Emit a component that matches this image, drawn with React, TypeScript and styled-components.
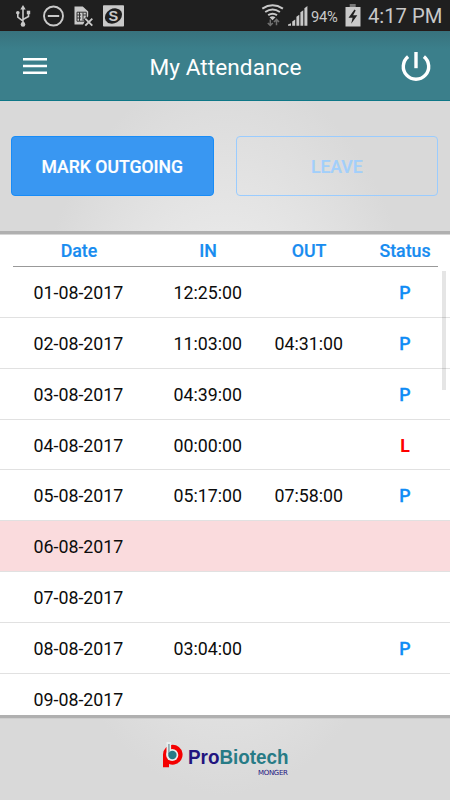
import React from 'react';
import styled, { createGlobalStyle } from 'styled-components';

const Global = createGlobalStyle`
  * { box-sizing: border-box; }
  body { margin: 0; font-family: Roboto, "Liberation Sans", sans-serif; }
  svg { display: block; flex: none; }
`;

const Screen = styled.div`
  width: 450px;
  height: 800px;
  overflow: hidden;
  display: flex;
  flex-direction: column;
  background: radial-gradient(ellipse 205px 365px at 225px 430px, #f8f8f8, #d9d9d9) #d9d9d9;
`;

const StatusBar = styled.header`
  height: 31px;
  flex: none;
  display: flex;
  align-items: flex-start;
  justify-content: space-between;
  background: #1f1f1f;
  border-bottom: 1px solid #241a18;
  color: #c9c9c9;
`;

const StatusGroup = styled.div`
  display: flex;
  align-items: flex-start;
  height: 30px;
`;

const Battery = styled.span`
  width: 31px;
  margin-left: 3px;
  font-size: 14.7px;
  line-height: 34px;
  letter-spacing: -0.2px;
  white-space: nowrap;
`;

const Clock = styled.span`
  width: 82px;
  margin-left: 7px;
  font-size: 20.2px;
  line-height: 32px;
  white-space: nowrap;
`;

const BatterySlot = styled.div`
  width: 17px;
  margin-left: 2px;
`;

const AppBar = styled.div`
  height: 70px;
  flex: none;
  display: grid;
  grid-template-columns: 70px 1fr 68px;
  align-items: center;
  background: linear-gradient(#38727d, #3b7f8b 18px);
  border-bottom: 1px solid #0e7787;
`;

const IconButton = styled.button`
  border: 0;
  padding: 0;
  height: 69px;
  background: none;
  display: flex;
  align-items: center;
  justify-content: center;
`;

const Title = styled.h1`
  margin: 0;
  padding: 5px 1px 0 0;
  text-align: center;
  color: #fff;
  font-size: 22.6px;
  line-height: 28px;
  font-weight: 400;
  letter-spacing: 0.08px;
`;

const Actions = styled.div`
  height: 130px;
  flex: none;
  display: grid;
  grid-template-columns: 202.5px 202.5px;
  gap: 22px;
  padding: 35px 11px 0;
`;

const ActionButton = styled.button<{ $outlined?: boolean }>`
  height: 60px;
  padding: 1px 0 0;
  border: 1px solid ${(p) => (p.$outlined ? '#9accff' : '#188cf7')};
  border-radius: 4px;
  background: ${(p) => (p.$outlined ? 'transparent' : '#3997f2')};
  color: ${(p) => (p.$outlined ? '#a2cffb' : '#fff')};
  font: 500 17.6px Roboto, sans-serif;
  -webkit-text-stroke: 0.2px;
`;

const Sheet = styled.main`
  height: 487px;
  flex: none;
  overflow: hidden;
  position: relative;
  background: #fff;
  border-top: 3px solid #b0b0b0;
  border-bottom: 3px solid #b0b0b0;
  box-shadow: inset 0 1px 0 #d6d6d6, 0 1px 0 #cecece;
`;

const HeadRow = styled.div`
  height: 33px;
  margin: 0 12px 0 13px;
  display: grid;
  grid-template-columns: 132px 126px 76px 1fr;
  border-bottom: 1px solid #999;
  color: #188cf0;
  font-size: 17.8px;
  font-weight: 500;
  line-height: 34px;
  -webkit-text-stroke: 0.2px;
`;

const HeadCell = styled.span<{ $width: number }>`
  width: ${(p) => p.$width}px;
  text-align: center;
`;

const Row = styled.div<{ $off?: boolean }>`
  height: 50.85px;
  display: grid;
  grid-template-columns: 173.5px 101px 104.5px 71px;
  background: ${(p) => (p.$off ? '#fadbdd' : '#fff')};
  border-bottom: 1px solid #e1e1e1;
  color: #0c0c0c;
  font-size: 17.8px;
  line-height: 52px;
`;

const Cell = styled.span<{ $indent?: number }>`
  padding-left: ${(p) => p.$indent ?? 0}px;
`;

const Status = styled.span<{ $leave: boolean }>`
  width: 52px;
  text-align: center;
  font-weight: ${(p) => (p.$leave ? 700 : 500)};
  -webkit-text-stroke: ${(p) => (p.$leave ? '0' : '0.3px')};
  color: ${(p) => (p.$leave ? '#f00' : '#108cf5')};
`;

const ScrollThumb = styled.div`
  position: absolute;
  top: 37px;
  right: 4px;
  width: 4px;
  height: 119px;
  background: rgba(0, 0, 0, 0.1);
`;

const Footer = styled.footer`
  flex: 1;
  display: flex;
  padding: 23px 0 0 162px;
`;

const Brand = styled.div`
  width: 100px;
  margin-left: 3.5px;
  font-family: "Liberation Sans", Arial, sans-serif;
  text-align: right;
`;

const BrandName = styled.div`
  display: flex;
  transform: scaleX(0.897);
  transform-origin: left;
  font-size: 21px;
  line-height: 24px;
  padding-top: 4px;
  font-weight: 700;
  color: #277b86;
  white-space: nowrap;
`;

const BrandLead = styled.span`
  color: #22147f;
`;

const BrandSub = styled.div`
  font-family: "DejaVu Sans", sans-serif;
  font-size: 7px;
  line-height: 9px;
  color: #22147f;
  letter-spacing: -0.35px;
`;

const G = '#c9c9c9';

const UsbIcon = () => (
  <svg width="41" height="30" viewBox="0 0 41 30" fill="none" stroke={G} strokeWidth="1.6">
    <path d="M23 8v16M17.8 14v3.2l5.2 4M28.5 13v3.5L23 19.5" />
    <path d="M23 5l2.7 4.5h-5.4z" fill={G} stroke="none" />
    <circle cx="23" cy="24.4" r="2.3" fill={G} stroke="none" />
    <circle cx="17.8" cy="12.7" r="1.8" fill={G} stroke="none" />
    <path d="M26.8 10.7h3.4v3.5h-3.4z" fill={G} stroke="none" />
  </svg>
);

const BlockIcon = () => (
  <svg width="32" height="30" viewBox="41 0 32 30" fill="none" stroke={G}>
    <circle cx="53.5" cy="16" r="9.5" strokeWidth="1.9" />
    <path d="M47.8 16h11.4" strokeWidth="2" />
  </svg>
);

const SimIcon = () => (
  <svg width="29" height="30" viewBox="73 0 29 30">
    <path d="M74.5 6.5h8.3l5.4 5.1v4.6l-2.5 3-2.5 5.3h-8.7z" fill={G} />
    <path d="M77 12.2h9.3v9H77zM79.5 12v9M77 15h4M77 18h4M83 12.5v8M83 15h3" stroke="#343434" strokeWidth="1" fill="none" />
    <path d="M84.7 18.3l7.5 7.7M92.3 18.3l-7.7 7.7" stroke="#1f1f1f" strokeWidth="4" />
    <path d="M85.3 18.7l7 7M92.3 18.7l-7 7" stroke={G} strokeWidth="1.9" />
  </svg>
);

const SIcon = () => (
  <svg width="24" height="30" viewBox="102 0 24 30">
    <rect x="103" y="5.2" width="21" height="21.3" rx="0.8" fill={G} />
    <ellipse cx="113.5" cy="16" rx="9" ry="7.2" transform="rotate(-30 113.5 16)" fill="#1f1f1f" />
    <text x="113.4" y="21" textAnchor="middle" fontFamily="Liberation Sans, sans-serif" fontWeight="700" fontSize="14.5" fill={G}>S</text>
  </svg>
);

const WifiIcon = () => (
  <svg width="25" height="30" viewBox="261 0 25 30" fill="none" stroke={G} strokeWidth="2">
    <path d="M262.3 8.6q10.3-6.6 20.6 0M265.2 12q7.4-5 14.7 0M268.2 15.2q4.4-3 8.8 0" />
    <path d="M269.5 17.3q3-2 6 0l-3 3z" fill={G} stroke="none" />
    <path d="M270.3 19.5v6M267.8 22.9l2.5 2.6 2.5-2.6M276.5 25.3v-6M274 22l2.5-2.6 2.5 2.6" stroke="#707070" strokeWidth="1.5" />
  </svg>
);

const SignalIcon = () => (
  <svg width="22" height="30" viewBox="286 0 22 30" fill={G}>
    <path d="M288 25.7v-1.2l3-1.3v2.5zM292.2 25.7v-4.2l3-2v6.2zM296.4 25.7v-9l2.9-2v11zM300.4 25.7v-13.5l2.9-2v15.5zM304.4 25.7V8.2l3-2.3v19.8z" />
  </svg>
);

const BatteryIcon = () => (
  <svg width="17" height="30" viewBox="343 0 17 30">
    <path d="M348.7 4h6v3.3h-6z" fill="#777" />
    <path d="M344.5 7h15v19.5h-15z" fill={G} />
    <path d="M353.5 9.5l-6 8.2h4.1l-1.4 6 6.1-8.5h-4.2l2.6-4.8z" fill="#1f1f1f" />
  </svg>
);

const MenuIcon = () => (
  <svg width="24" height="18" viewBox="0 0 24 18" fill="#fff">
    <path d="M0 1h24v2.6H0zM0 7.7h24v2.6H0zM0 14.4h24V17H0z" />
  </svg>
);

const PowerIcon = () => (
  <svg width="30" height="32" viewBox="0 0 30 32" fill="none" stroke="#fff" strokeWidth="3.4">
    <path d="M15 2v16.2" />
    <path d="M7.1 6.6a12.7 12.7 0 1 0 15.8 0" />
  </svg>
);

const LogoMark = () => (
  <svg width="22" height="28" viewBox="162 741 22 28">
    <path d="M163 767.2v-12.7a10 10 0 0 1 3-7.1 9.9 9.9 0 1 1 3 16.5v3.3z" fill="#f40000" />
    <path d="M168.8 742v12.5" stroke="#e8eeee" strokeWidth="4.6" />
    <circle cx="172.2" cy="755" r="6.1" fill="#e8eeee" />
    <path d="M168.9 744v10" stroke="#8da5aa" strokeWidth="1.6" />
    <circle cx="172.4" cy="755" r="4.2" fill="#277b86" />
  </svg>
);

type Entry = { date: string; inTime?: string; outTime?: string; status?: 'P' | 'L'; off?: boolean };

const entries: Entry[] = [
  { date: '01-08-2017', inTime: '12:25:00', status: 'P' },
  { date: '02-08-2017', inTime: '11:03:00', outTime: '04:31:00', status: 'P' },
  { date: '03-08-2017', inTime: '04:39:00', status: 'P' },
  { date: '04-08-2017', inTime: '00:00:00', status: 'L' },
  { date: '05-08-2017', inTime: '05:17:00', outTime: '07:58:00', status: 'P' },
  { date: '06-08-2017', off: true },
  { date: '07-08-2017' },
  { date: '08-08-2017', inTime: '03:04:00', status: 'P' },
  { date: '09-08-2017' },
];

export default function App() {
  return (
    <>
      <Global />
      <Screen>
        <StatusBar>
          <StatusGroup>
            <UsbIcon />
            <BlockIcon />
            <SimIcon />
            <SIcon />
          </StatusGroup>
          <StatusGroup>
            <WifiIcon />
            <SignalIcon />
            <Battery>94%</Battery>
            <BatterySlot>
              <BatteryIcon />
            </BatterySlot>
            <Clock>4:17 PM</Clock>
          </StatusGroup>
        </StatusBar>
        <AppBar>
          <IconButton aria-label="Menu"><MenuIcon /></IconButton>
          <Title>My Attendance</Title>
          <IconButton aria-label="Log out"><PowerIcon /></IconButton>
        </AppBar>
        <Actions>
          <ActionButton>MARK OUTGOING</ActionButton>
          <ActionButton $outlined>LEAVE</ActionButton>
        </Actions>
        <Sheet>
          <HeadRow>
            <HeadCell $width={132}>Date</HeadCell>
            <HeadCell $width={126}>IN</HeadCell>
            <HeadCell $width={76}>OUT</HeadCell>
            <HeadCell $width={116}>Status</HeadCell>
          </HeadRow>
          {entries.map((e) => (
            <Row key={e.date} $off={e.off}>
              <Cell $indent={33.5}>{e.date}</Cell>
              <Cell>{e.inTime}</Cell>
              <Cell>{e.outTime}</Cell>
              <Status $leave={e.status === 'L'}>{e.status}</Status>
            </Row>
          ))}
          <ScrollThumb />
        </Sheet>
        <Footer>
          <LogoMark />
          <Brand>
            <BrandName><BrandLead>Pro</BrandLead>Biotech</BrandName>
            <BrandSub>MONGER</BrandSub>
          </Brand>
        </Footer>
      </Screen>
    </>
  );
}
